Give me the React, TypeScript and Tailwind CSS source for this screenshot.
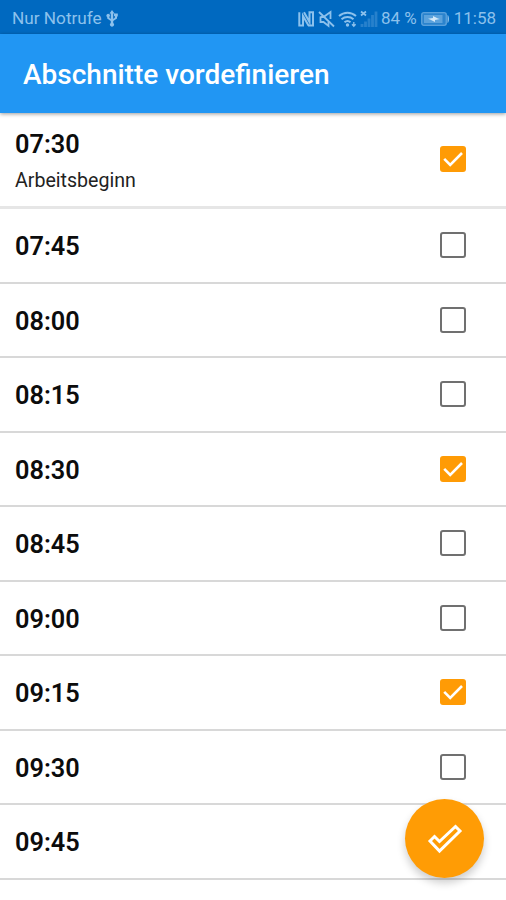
type Section = { time: string; note?: string; checked?: boolean };

const sections: Section[] = [
  { time: '07:30', note: 'Arbeitsbeginn', checked: true },
  { time: '07:45' },
  { time: '08:00' },
  { time: '08:15' },
  { time: '08:30', checked: true },
  { time: '08:45' },
  { time: '09:00' },
  { time: '09:15', checked: true },
  { time: '09:30' },
  { time: '09:45' },
];

function UsbIcon() {
  return (
    <svg width="12" height="17" viewBox="0 0 12 17" fill="currentColor">
      <path d="M6 0l2.500 3.500H7.200V9l1.600-1.300V6H8V3.500h3.800V6.500h-.8v2L7.200 11v2a2 2 0 1 1-2.400 0v-2L1.200 8.500V7A1.700 1.700 0 1 1 3.400 6.800v1L4.800 9V3.500H3.500z" />
    </svg>
  );
}

function StatusIcons() {
  return (
    <svg width="80" height="18" viewBox="0 0 80 18" fill="none" stroke="currentColor">
      {/* nfc */}
      <path d="M1.300 2.200V15.500H5V6l5.500 9.500M6 2.200L11.500 12V2.200H15V15.500H10" strokeWidth="2" />
      {/* muted */}
      <path d="M21 2l15 14.500" strokeWidth="1.800" />
      <path d="M22.500 7h3l7-5v7M22.500 6.500v5.500h3l5 4v-4" strokeWidth="1.800" />
      {/* wifi */}
      <path d="M41 6c5-4.500 12-4.500 17 0M43.500 9.300c3.500-3 8.500-3 12 0M46.500 12.300c1.800-1.500 4.200-1.500 6 0" strokeWidth="2" />
      <circle cx="49.500" cy="15" r="1.700" fill="currentColor" stroke="none" />
      <path d="M55.800 12v4M54 14.200l1.800 2 1.800-2" strokeWidth="1.300" />
      {/* no signal */}
      <path d="M63 1.500l5 4M68 1.500l-5 4" strokeWidth="1.700" />
      <path d="M64 14v3M67.500 11.500V17M71 8.500V17M74.500 5v12M78 1.500V17" strokeWidth="2.800" opacity=".28" />
    </svg>
  );
}

function BatteryIcon() {
  return (
    <svg width="29" height="14" viewBox="0 0 29 14">
      <rect x=".7" y=".7" width="24.600" height="12.600" rx="2" fill="currentColor" fillOpacity=".3" stroke="currentColor" strokeWidth="1.300" strokeOpacity=".6" />
      <rect x="3" y="3" width="18.500" height="8" fill="currentColor" opacity=".5" />
      <path d="M7 6.700l5-.8V4l5 2.500 2 .5-5 1v2L9 7.500z" fill="#d3e8f8" />
      <path d="M26.500 3c2 1 2 7 0 8z" fill="currentColor" />
    </svg>
  );
}

function CheckBox({ checked }: { checked?: boolean }) {
  if (!checked) return <span className="h-[26px] w-[26px] rounded-[3px] border-2 border-[#707070]" />;
  return (
    <span className="flex h-[26px] w-[26px] items-center justify-center rounded-[3px] bg-[#ff9b05]">
      <svg width="26" height="26" viewBox="0 0 26 26" fill="none" stroke="#fff" strokeWidth="2.600">
        <path d="M4.200 12.800l6 6L22 7" />
      </svg>
    </span>
  );
}

function Row({ time, note, checked }: Section) {
  return (
    <li
      className={
        note
          ? 'flex h-[96px] items-center justify-between border-b-[3px] border-[#e6e6e6] pr-[40px] pl-[15px]'
          : 'flex h-[74.500px] items-center justify-between border-b-2 border-[#d8d8d8] pr-[40px] pl-[15px]'
      }
    >
      <div className={note ? 'pt-[3px]' : 'pt-[4px]'}>
        <p className="text-[25.300px] leading-[30px] font-semibold">{time}</p>
        {note && <p className="mt-[9px] text-[19.600px] leading-6 text-[#222]">{note}</p>}
      </div>
      <div className={note ? 'flex pb-[1px]' : 'flex'}>
        <CheckBox checked={checked} />
      </div>
    </li>
  );
}

export default function App() {
  return (
    <div className="relative flex h-[900px] w-[506px] flex-col overflow-hidden bg-white font-[Roboto,sans-serif] text-[#0c0c0c]">
      <div className="flex h-[34px] shrink-0 items-center bg-[#0069c0] pt-[3px] pr-[10px] pl-3 text-[17px] text-[#8cc1ec]">
        <span className="mr-[4px] text-[17.200px]">Nur Notrufe</span>
        <UsbIcon />
        <span className="flex-1" />
        <StatusIcons />
        <span className="ml-[3px]">84 %</span>
        <span className="mx-[4px]"><BatteryIcon /></span>
        <span>11:58</span>
      </div>
      <header className="z-10 flex h-[79px] shrink-0 items-center bg-[#2196f3] pt-[2px] pl-[23px] shadow-[0_1px_4px_rgba(0,0,0,0.4)]">
        <h1 className="text-[28px] font-medium text-white">Abschnitte vordefinieren</h1>
      </header>
      <ul className="shrink-0">
        {sections.map((s) => (
          <Row key={s.time} {...s} />
        ))}
      </ul>
      <button
        aria-label="Übernehmen"
        className="absolute top-[799px] left-[405px] flex h-[79px] w-[79px] items-center justify-center rounded-full bg-[#ff9c05] shadow-[0_5px_9px_rgba(0,0,0,0.2)]"
      >
        <svg width="36" height="30" viewBox="0 0 36 30" fill="none" stroke="#fff" strokeWidth="3">
          <path d="M3 17l4.500-4.500 5 5L28.500 2.500 33 7 12.500 27z" />
        </svg>
      </button>
    </div>
  );
}
